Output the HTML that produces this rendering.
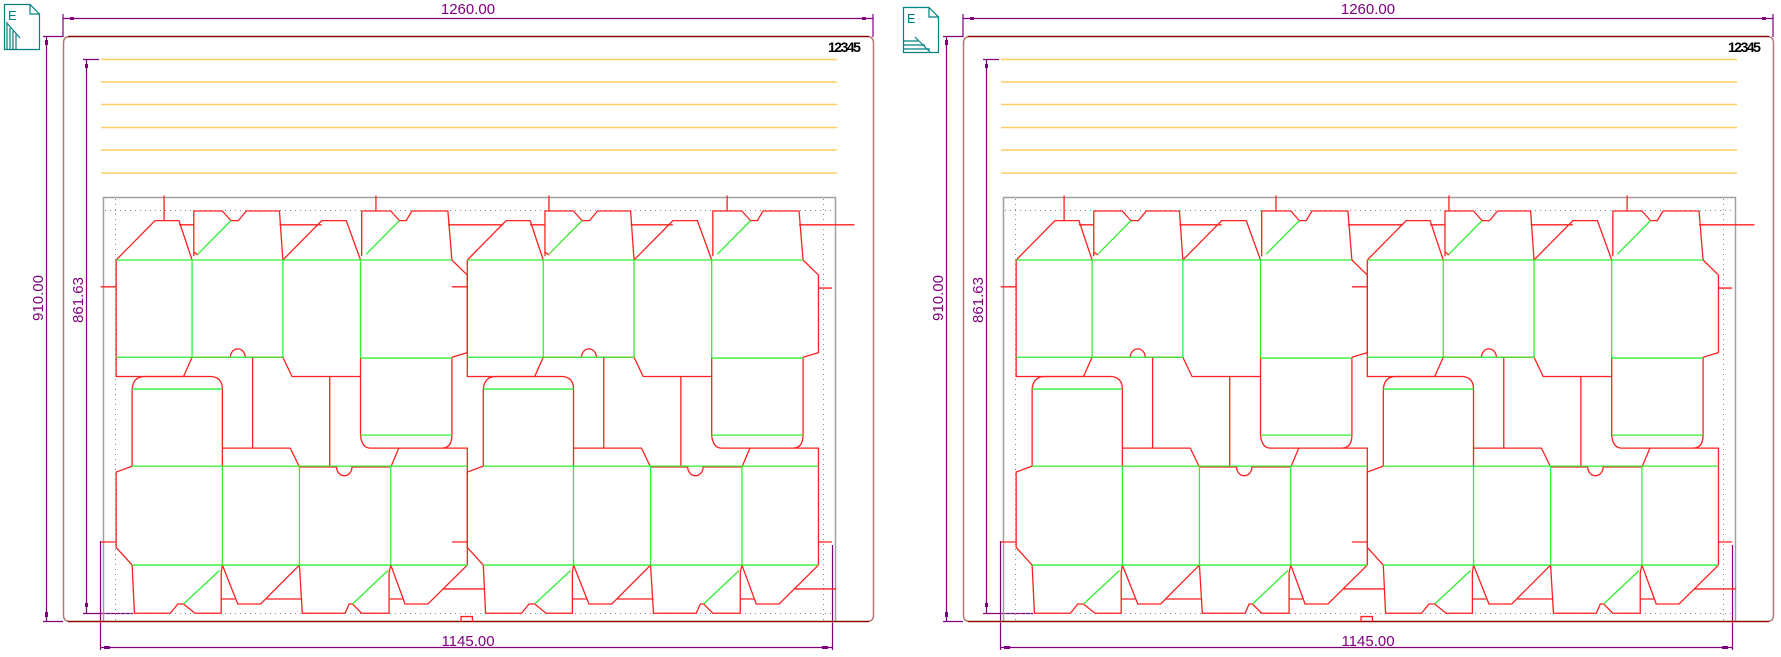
<!DOCTYPE html>
<html><head><meta charset="utf-8"><style>
html,body{margin:0;padding:0;background:#fff;width:1781px;height:657px;overflow:hidden}
svg{display:block}
.t{font-family:"Liberation Sans",sans-serif;fill:#800080;font-size:15px}
</style></head><body>
<svg width="1781" height="657" viewBox="0 0 1781 657" xmlns="http://www.w3.org/2000/svg">
<defs>
<g id="blk" fill="none" stroke-width="1.3">
 <g stroke="#ff2020">
  <path vector-effect="non-scaling-stroke" d="M202,619 L270,525 L312,525 L335,619 M312,535 L338,535 M338,610 L338,502 L388,502 L403,525 L416,525 L430,502 L488,502 L494,619 M338,600 L345,607 M488,535 L562,535 M494,619 L562,525 L605,525 L630,619 M632,610 L632,502 L683,502 L698,525 L710,525 L720,502 L783,502 L790,619 M657,465 L657,502 M783,535 L880,535"/>
  <path vector-effect="non-scaling-stroke" d="M790,619 L817,655 L817,840 L790,851 M175,683 L202,683 M202,619 L202,897 L320,897 L335,851 M335,851 L402,851 A13,20 0 0 1 428,851 L494,851 L510,897 L630,897 M441,851 L441,1068 M576,897 L576,1113 M630,853 L630,1037 Q632,1068 648,1068 L772,1068 Q790,1068 790,1037 L790,851 M697,1068 L817,1068 L817,1113"/>
  <path vector-effect="non-scaling-stroke" d="M230,1111 L202,1125 L202,1305 L230,1347 M175,1292 L202,1292 M230,1111 L230,927 Q232,897 252,897 L370,897 Q388,900 388,927 L388,1111 M388,1068 L507,1068 L523,1113 L588,1113 A13,20 0 0 0 615,1113 L683,1113 L697,1068 M817,1113 L817,1347"/>
  <path vector-effect="non-scaling-stroke" d="M230,1347 L234,1462 L297,1462 L310,1440 L320,1440 L340,1462 L386,1462 L386,1365 L388,1347 M386,1428 L410,1428 M388,1347 L415,1440 L455,1440 L523,1347 M465,1428 L528,1428 M523,1347 L528,1462 L603,1462 L610,1440 L616,1440 L632,1462 L680,1462 L680,1365 L683,1347 M680,1428 L705,1428 M683,1347 L708,1440 L748,1440 L817,1347 M775,1404 L848,1404"/>
 </g>
 <g stroke="#33ee33">
  <path vector-effect="non-scaling-stroke" d="M202,619 L790,619 M202,851 L494,851 M630,853 L790,853 M335,619 L335,851 M494,619 L494,851 M630,619 L630,853 M345,605 L403,525 M640,605 L698,525 M630,1037 L790,1037"/>
  <path vector-effect="non-scaling-stroke" d="M230,927 L388,927 M230,1111 L817,1111 M230,1347 L817,1347 M388,1111 L388,1347 M523,1111 L523,1347 M683,1111 L683,1347 M320,1440 L383,1360 M616,1440 L678,1360"/>
 </g>
</g>
<g id="panel">
 <g stroke="#800080" stroke-width="1.2" fill="none">
  <path d="M63,14 V37 M873,14 V37 M63,18.5 H873 M43,36.5 H63 M43,621.5 H63 M46.5,36 V621 M83,59.5 H99 M83,613.5 H133 M86.5,59 V613 M100.5,541 V650 M832.5,545 V650 M100,647.5 H832"/>
 </g>
 <g fill="#800080"><rect x="70" y="17" width="4" height="3"/><rect x="862" y="17" width="4" height="3"/><rect x="45" y="40" width="3" height="5"/><rect x="45" y="612" width="3" height="5"/><rect x="85" y="64" width="3" height="4"/><rect x="85" y="603" width="3" height="4"/><rect x="104" y="646" width="6" height="3"/><rect x="822" y="646" width="6" height="3"/></g>
 <text class="t" x="468" y="14" text-anchor="middle">1260.00</text>
 <text class="t" x="468" y="646" text-anchor="middle">1145.00</text>
 <text class="t" transform="translate(43,298) rotate(-90)" text-anchor="middle">910.00</text>
 <text class="t" transform="translate(83,300) rotate(-90)" text-anchor="middle">861.63</text>
 <path d="M63.5,615 V43 Q63.5,36.5 70,36.5 H867 Q873.5,36.5 873.5,43 V615 Q873.5,621.5 867,621.5 H70 Q63.5,621.5 63.5,615 Z" fill="none" stroke="#b47878" stroke-width="1.5"/>
 <path d="M68,36.5 H869 M68,621.5 H869" stroke="#900000" stroke-width="1.2"/>
 <text x="828" y="52" font-family="Liberation Sans,sans-serif" font-size="14" font-weight="bold" letter-spacing="-1.5" fill="#000">12345</text>
 <g stroke="#ffcc66" stroke-width="1.6"><path d="M101,59.5 H837 M101,82 H837 M101,104.5 H837 M101,127.5 H837 M101,150 H837 M101,173 H837"/></g>
 <path d="M103.5,621 V197.5 H835.5 V621" fill="none" stroke="#a0a0a0" stroke-width="1.5"/>
 <path d="M105,210.5 H835 M115.5,199 V621 M823.5,199 V621 M105,613.5 H835" fill="none" stroke="#888" stroke-width="1" stroke-dasharray="1,4"/>
 <g transform="matrix(0.571,0,0,0.419,0.8,0.65)">
  <use href="#blk"/>
  <use href="#blk" transform="translate(615,0)"/>
  <path vector-effect="non-scaling-stroke" d="M286,465 L286,525 M960,465 L960,502 M1432,686 L1456,686 M1432,1292 L1456,1292 M806,1482 L806,1470 L826,1470 L826,1482" fill="none" stroke="#ff2020" stroke-width="1.3"/>
 </g>
</g>
</defs>
<use href="#panel"/>
<use href="#panel" x="900"/>
<g fill="none" stroke="#008080" stroke-width="1.2">
 <path d="M4.5,4.5 H30 L39.5,14 V49.5 H4.5 Z M30,4.5 V14 H39.5"/>
 <path d="M6,22 L20,38 M7,24 V49 M10,28 V49 M13,31 V49 M16,34 V49"/>
 <path d="M903.5,7.5 H929 L938.5,17 V52.5 H903.5 Z M929,7.5 V17 H938.5"/>
 <path d="M904,41 H918 M904,45 H925 M904,49 H930 M915,37 L930,52"/>
</g>
<text x="8" y="20" font-family="Liberation Sans,sans-serif" font-size="13" fill="#008080">E</text>
<text x="907" y="23" font-family="Liberation Sans,sans-serif" font-size="13" fill="#008080">E</text>
</svg>
</body></html>
